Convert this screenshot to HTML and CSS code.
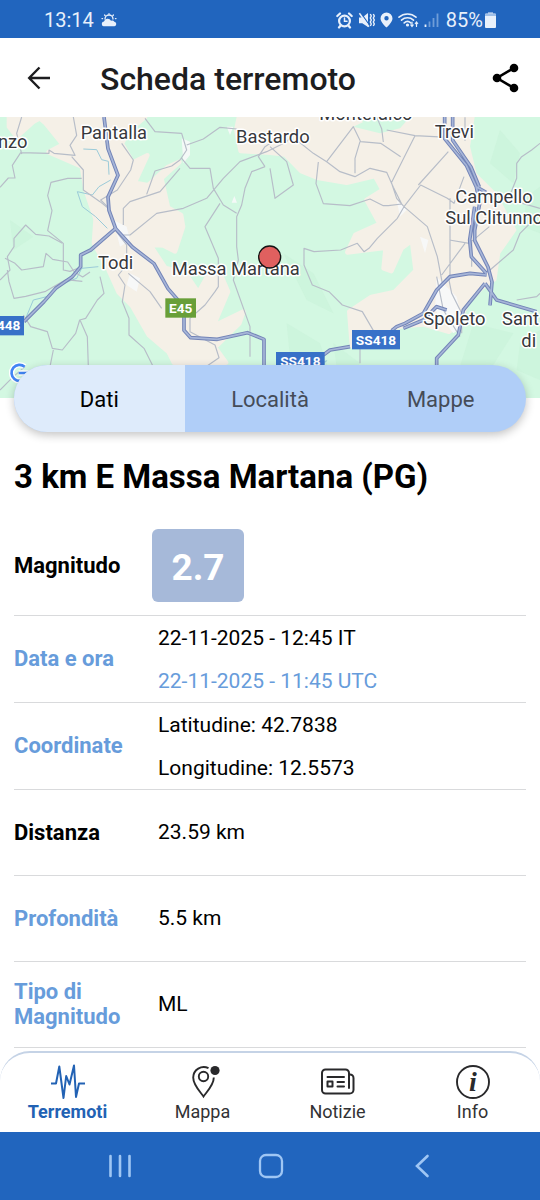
FILE: index.html
```html
<!DOCTYPE html>
<html lang="it">
<head>
<meta charset="utf-8">
<meta name="viewport" content="width=device-width, initial-scale=1">
<title>Scheda terremoto</title>
<link rel="stylesheet" href="styles.css">
</head>
<body>
<div class="status">
  <span class="status-time">13:14</span>
  <svg class="status-weather" width="16" height="14" viewBox="0 0 16 14" fill="none" stroke="#e8f0fb" stroke-width="1.3" stroke-linecap="round"><path d="M4 6a4 4 0 0 1 8 0M8 .7v.5M3.600 2l.5.6M12.400 2l-.5.6M1 5.600h.6M14.400 5.600h.6"/><path d="M2.500 13.300a2.400 2.400 0 0 1 .5-4.700 3.800 3.800 0 0 1 7-.8 2.900 2.900 0 0 1 3.400 1 2.300 2.300 0 0 1 .1 4.500z" fill="#e8f0fb" stroke="none"/></svg>
  <div class="status-icons">
    <svg width="17" height="17" viewBox="0 0 17 17" fill="none" stroke="#e8f0fb" stroke-width="2.200" stroke-linecap="round"><circle cx="8.500" cy="9" r="5.400"/><path d="M1.300 4 4 1.500M15.700 4 13 1.500M4.200 14l-1.200 1.500M12.800 14l1.200 1.500"/><path d="M8.500 6v3.200H11" stroke-width="1.500"/></svg>
    <svg width="17" height="17" viewBox="0 0 17 17" fill="#e8f0fb"><path d="M1 5.500h3.300L10 1v14l-5.700-3.800H1z"/><path d="m2.600.6 9.500 13.600" stroke="#2165be" stroke-width="1.200"/><path d="m1.400 1.200 9.500 13.600" stroke="#e8f0fb" stroke-width="1.500"/><path d="m12.300 2 1 2-1 2 1 2-1 2 1 2-1 2M15.300 2l1 2-1 2 1 2-1 2 1 2-1 2" stroke="#e8f0fb" stroke-width="1.400" fill="none"/></svg>
    <svg width="13" height="16" viewBox="0 0 13 16"><path fill="#e8f0fb" fill-rule="evenodd" d="M6.500.5a6 6 0 0 0-6 6c0 4 6 9 6 9s6-5 6-9a6 6 0 0 0-6-6zm0 3.600a2.200 2.200 0 1 1 0 4.400 2.200 2.200 0 0 1 0-4.400z"/></svg>
    <svg width="21" height="16" viewBox="0 0 21 16" fill="none" stroke="#e8f0fb" stroke-width="1.600" stroke-linecap="round"><path d="M1 5.200a13 13 0 0 1 17 0M3.500 8.100a9 9 0 0 1 12 0M6.200 10.900a5 5 0 0 1 6.600 0"/><circle cx="9.500" cy="13" r=".8" fill="#e8f0fb"/><path d="M14 10v4M12.800 13l1.200 1.500 1.200-1.500M18.500 14.500v-4M17.300 11.500l1.200-1.500 1.200 1.500" stroke-width="1.200"/></svg>
    <svg width="15" height="16" viewBox="0 0 15 16" stroke-width="1.800"><path d="M1.500 15v-2.500" stroke="#e8f0fb"/><path d="M5.500 15V9.500M9.500 15V6M13.500 15V1.500" stroke="#6f9dd8"/></svg>
  </div>
  <span class="status-battery">85%</span>
  <svg width="11" height="16" viewBox="0 0 11 16" fill="#e8f0fb"><path d="M3 0h5v2H3z" opacity=".5"/><rect y="1.500" width="11" height="14.500" rx="1"/><path d="M0 3h11" stroke="#9fbfe8" stroke-width="2"/></svg>
</div>

<header class="appbar">
  <button class="icon-button" aria-label="Indietro"><svg width="24" height="24" viewBox="0 0 24 24" fill="none" stroke="#1d1d1f" stroke-width="2.400"><path d="M24 12H3.500M13.500 1.500 3.200 12l10.300 10.500"/></svg></button>
  <h1 class="appbar-title">Scheda terremoto</h1>
  <button class="icon-button" aria-label="Condividi"><svg width="28" height="30" viewBox="0 0 28 30"><path d="M22 5 5 15l17 10" fill="none" stroke="#000" stroke-width="2.600"/><circle cx="22" cy="5" r="4.300"/><circle cx="5" cy="15" r="4.300"/><circle cx="22" cy="25" r="4.300"/></svg></button>
</header>

<main class="content">
  <svg class="map" viewBox="0 21 1620 843" preserveAspectRatio="xMidYMid slice" role="img" aria-label="Mappa dell'epicentro">
    <rect y="21" width="1620" height="843" fill="#d3f8e2"/>
    <g fill="#c7f1d7">
      <path d="M1500 60l60 70-20 90-70-60zM850 430l90 60 60 120-80-40zM860 640l100 60 30 90-120-50zM1420 640l120 30-70 110-40 60-50-70zM560 580l80 90-60 60zM30 330l70 50-60 40zM1560 700l60-40v150l-70-30zM1000 700l80 60-60 80zM1580 260l40-30v140l-50-20z" opacity=".5"/>
    </g>
    <g fill="#f5f0e7" stroke="#f5f0e7" stroke-width="14" stroke-linejoin="round">
      <path d="M27 21h100l-27 14-50 45-23-30z"/>
      <path d="M115 21H435L392 58 365 100 398 158 442 136 404 218 444 226 502 172 538 156 484 205 504 293 543 315 549 350 525 424 490 406 450 404 496 474 556 490 595 548 630 485 661 492 684 545 640 648 730 605 718 640 645 712 678 758H522L506 726 447 676 396 587 356 547 326 480 282 400 287 327 257 240 246 170 146 126 189 104 137 40z"/>
      <path d="M717 21h700L1403 110 1423 193 1484 254 1542 360 1494 428 1483 507 1444 534 1403 576 1373 644 1347 665 1270 643 1210 648 1140 663 1056 708 1048 605 1114 561 1184 546 1247 482 1236 392 1205 414 1174 483 1151 475 1157 413 1042 427 1066 375 1139 342 1100 270 1148 240 1125 198 1040 218 952 203 904 183 855 133 811 128 722 123 709 60z"/>
    </g>
    <path fill="#d3f8e2" d="M1060 50l80 20 60-15 30-34H1060l30 15z"/>
    <g fill="#f7f8fa" opacity=".9"><path d="M340 330l40 20 10 40-30 20zM545 85l25 10v40l-20 25zM680 50h20l-10 25zM1190 270l30 30-20 20zM1260 380l25 10-10 40zM1310 500l60 60 20 90-30 20-55-70zM390 490l30 15-10 40-30-20zM695 278l8-20 8 20z"/></g>
    <g fill="none" stroke="#9bcbd9" stroke-width="3">
      <path d="M250 117l40 2 15 30 20 5 2 40M332 210l-35 20-20 25-45-10 15 45 40 30 35 35M75 630l25-60 40-10 50-40 40-15 15-30 50-5M940 750l20 12 20-10-20 20"/>
    </g>
    <g fill="none" stroke="#b7bdc8" stroke-width="3.500" stroke-linejoin="round">
      <path d="M0 232l25-28h20l-8-38 25-38 85 2v-10l15 10 63 6-15-30 20-30-10-55M65 21L50 70l15 62"/>
      <path d="M215 140l35 40v60l50 35 25 20M245 205h-42l-50 12-10 40 13 45-13 60 47 38v80l20 4 26-10"/>
      <path d="M0 510l30-30-8-40 20-30v-25l35-40 30 28 40 5 40 22"/>
      <path d="M22 480l5 35 15 50 35-6 60-15 60-35 50 5M15 445l30 15 20 20 65-10 8-40 20 18 45 8 20 30 25 15 22-15"/>
      <path d="M300 500l12 50-20 20-35 55-18 5-12 40-40 50-30-5-15-50-50-15-22-35M240 630l22 50 3 90M160 720l-10 50M0 840l40-40 35-30"/>
      <path d="M365 100l35 50-8 30-40 60-50 30 20 20M435 25l30 40 80 5 15 50-20 30-25 18-50 15-25 70M560 105l50-18 50-35 50 5M545 145l25 30h60l10 60 30 50 40 25M370 345v-50l20-20 90-30 60-70M370 375h20l80-65 80-15 70-30 50-60 50-50 80-30 60-30 30-35"/>
      <path d="M795 170l-20-30 20-30 30-20M795 170l-40 15-20 50-10 50-15 35v90l5 40-15 60 50 140v90"/>
      <path d="M660 280l-45 70 40 95v85l-10 15-30 40-45 40v40l75 40 12 38-50 35M345 360l35 45v60l-25 30 20 30-8 50 20 50v50l45 40 30 60M385 490l65 55 35 50"/>
      <path d="M810 110l50 45 20 70-55 40-15-90M890 90l50 40 40 25M980 155l80-105 22 45 60 5 60 40M1080 95l-15 50v45M980 155l40 30 45 15 45-25 50 12 20 45 25 50-40 5h-15l-40-20-60 20-80-6-22-60 7-65M1130 21l15 35 5 40M1160 60l85 17 100 5M1245 77l-40 80-30 60M1175 220l15 45 22 25 70 60 30 90 15 80M1212 290l50-65 80 40 20 15 30-80M1255 225l90-100M1212 290l-20 35-60 60-25 30-15 10-20-25-50 20-80 5-30-10v50l25 60 50 20 40 40 60 20 35 60M1350 265v240M1348 390l60 10 60-50M1395 400l-70 95M1415 390v80M1395 22v70M1620 310l-60 60-20 50-70 60"/>
      <path d="M1620 100l-25 20-30 20-15 20v45l-20 50 20 20 70 20M1310 500l20 100 50 80M1345 500l10 50 30 60v60M1620 550l-10 10-60 10M1080 700v60"/>
    </g>
    <g fill="none" stroke-linejoin="round">
      <g stroke="#7384b7" stroke-width="11">
        <path d="M312 21l12 95 30 80-30 65 3 40 20 55 50 55 65 50 42 75 48 55v70l20 22 80 5 90-20 50 20v90"/>
        <path d="M347 355l-75 65-30 15v35l-25 30-50 35-35 40-60 60"/>
        <path d="M1334 21v65l65 80 30 65 10 50-15 80v30l40 80 12 45-6 70M1358 21v70l55 80 25 60M1424 290l-15 100 5 50 45 50M1430 231l28 16M1460 495l-50-5-60 10-40 40-40 70-55 30-25 10-15 12M1455 520l35 50 120 35M1455 520l-65 80-15 75-65 70v50M1210 655l60-25 40-40 30 10M970 735l20-15 60-10"/>
      </g>
      <g stroke="#a6b5d8" stroke-width="5">
        <path d="M312 21l12 95 30 80-30 65 3 40 20 55 50 55 65 50 42 75 48 55v70l20 22 80 5 90-20 50 20v90"/>
        <path d="M347 355l-75 65-30 15v35l-25 30-50 35-35 40-60 60"/>
        <path d="M1334 21v65l65 80 30 65 10 50-15 80v30l40 80 12 45-6 70M1358 21v70l55 80 25 60M1424 290l-15 100 5 50 45 50M1430 231l28 16M1460 495l-50-5-60 10-40 40-40 70-55 30-25 10-15 12M1455 520l35 50 120 35M1455 520l-65 80-15 75-65 70v50M1210 655l60-25 40-40 30 10M970 735l20-15 60-10"/>
      </g>
    </g>
    <g class="map-labels">
      <text x="-6" y="113">nzo</text>
      <text x="242" y="87">Pantalla</text>
      <text x="708" y="99">Bastardo</text>
      <text x="958" y="29">Montefalco</text>
      <text x="1304" y="85">Trevi</text>
      <text x="1366" y="279">Campello</text>
      <text x="1336" y="343">Sul Clitunno</text>
      <text x="294" y="477">Todi</text>
      <text x="515" y="496">Massa Martana</text>
      <text x="1270" y="646">Spoleto</text>
      <text x="1506" y="646">Sant</text>
      <text x="1564" y="712">di</text>
    </g>
    <g fill="#3871c8">
      <rect x="496" y="565" width="92" height="58" fill="#689f38"/>
      <rect x="-40" y="618" width="112" height="58"/>
      <rect x="1056" y="660" width="144" height="58"/>
      <rect x="828" y="726" width="146" height="58"/>
    </g>
    <g class="map-shields">
      <text x="542" y="608">E45</text>
      <text x="26" y="661">448</text>
      <text x="1128" y="704">SS418</text>
      <text x="901" y="768">SS418</text>
    </g>
    <circle cx="809" cy="441" r="33" fill="#e0605f" stroke="#141414" stroke-width="4"/>
    <path d="M74 770a24 24 0 1 0 3 34M56 789h30" fill="none" stroke="#fff" stroke-width="16"/>
    <path d="M74 770a24 24 0 1 0 3 34M56 789h30" fill="none" stroke="#4285f4" stroke-width="8"/>
  </svg>

  <div class="tabs" role="tablist">
    <button class="tab tab-active" role="tab" aria-selected="true">Dati</button>
    <button class="tab" role="tab" aria-selected="false">Località</button>
    <button class="tab" role="tab" aria-selected="false">Mappe</button>
  </div>

  <section class="details">
    <h2 class="place">3 km E Massa Martana (PG)</h2>
    <table class="facts">
      <tr class="row-magnitude"><th scope="row">Magnitudo</th><td class="magnitude-cell"><span class="magnitude">2.7</span></td></tr>
      <tr><th scope="row" class="link">Data e ora</th><td><p>22-11-2025 - 12:45 IT</p><p class="link">22-11-2025 - 11:45 UTC</p></td></tr>
      <tr><th scope="row" class="link">Coordinate</th><td><p>Latitudine: 42.7838</p><p>Longitudine: 12.5573</p></td></tr>
      <tr><th scope="row">Distanza</th><td>23.59 km</td></tr>
      <tr><th scope="row" class="link">Profondità</th><td>5.5 km</td></tr>
      <tr><th scope="row" class="link">Tipo di Magnitudo</th><td>ML</td></tr>
    </table>
  </section>
</main>

<nav class="nav">
  <a class="nav-item nav-active" href="#terremoti"><svg width="36" height="36" viewBox="0 0 36 36" fill="none" stroke="#2262b4" stroke-width="2" stroke-linejoin="round"><path d="M1 19.500h5l3.300-17 4.200 31.500 2.700-22 3.300 8.500L24 1.500l2 31.500 3-13.500h6"/></svg>Terremoti</a>
  <a class="nav-item" href="#mappa"><svg width="36" height="36" viewBox="0 0 36 36" fill="none" stroke="#29292b" stroke-width="1.900"><path d="M23.500 4.200A10.500 10.500 0 0 0 8.200 13.500C8.200 21 15 27.500 18.500 32.500c3.500-5 10.300-11.500 10.300-19"/><circle cx="18.500" cy="12.500" r="4.700"/><circle cx="30" cy="6.500" r="4.600" fill="#29292b" stroke="none"/></svg>Mappa</a>
  <a class="nav-item" href="#notizie"><svg width="36" height="36" viewBox="0 0 36 36" fill="none" stroke="#29292b" stroke-width="2" stroke-linecap="round" stroke-linejoin="round"><path d="M29 24V9a3.500 3.500 0 0 0-3.500-3.500h-20A3.500 3.500 0 0 0 2 9v17a3.500 3.500 0 0 0 3.500 3.500h24A4 4 0 0 0 33.500 26V14a3.500 3.500 0 0 0-4-3.500M7.500 13h16.500M17.500 18H24M17.500 22.500H24M7.500 17.500h5v5h-5z"/></svg>Notizie</a>
  <a class="nav-item" href="#info"><svg width="36" height="36" viewBox="0 0 36 36"><circle cx="18" cy="18" r="16" fill="none" stroke="#29292b" stroke-width="1.900"/><text class="info-letter" x="18" y="27">i</text></svg>Info</a>
</nav>
<div class="system">
  <button class="system-button" aria-label="App recenti"><svg width="24" height="26" viewBox="0 0 24 26" stroke="#9fc6f4" stroke-width="2.600" stroke-linecap="round"><path d="M2.500 3v20M12 3v20M21.500 3v20"/></svg></button>
  <button class="system-button" aria-label="Home"><svg width="26" height="26" viewBox="0 0 26 26" fill="none" stroke="#9fc6f4" stroke-width="2.300"><rect x="2" y="2" width="22" height="22" rx="6"/></svg></button>
  <button class="system-button" aria-label="Indietro"><svg width="26" height="26" viewBox="0 0 26 26" fill="none" stroke="#9fc6f4" stroke-width="2.600" stroke-linecap="round"><path d="M18.500 3 8 13l10.500 10"/></svg></button>
</div>
</body>
</html>
```
FILE: styles.css
```css
* { box-sizing: border-box; }
body {
  margin: 0;
  min-height: 100vh;
  display: flex;
  flex-direction: column;
  background: #fff;
  color: #000;
  font-family: Roboto, "Liberation Sans", sans-serif;
  font-size: 22px;
}
button { border: 0; padding: 0; background: none; font: inherit; color: inherit; }
svg { display: block; flex: none; }

.status {
  display: flex;
  align-items: center;
  height: 38px;
  padding: 2px 44px 0;
  background: #2165be;
  color: #e8f0fb;
  font-size: 20px;
}
.status-weather { margin-left: 7px; }
.status-icons { display: flex; align-items: center; gap: 5px; margin-left: auto; }
.status-battery { margin: 0 2px 0 7px; }

.appbar {
  display: flex;
  align-items: center;
  height: 79px;
  padding: 0 20px 0 26px;
}
.icon-button { display: flex; }
.appbar-title {
  flex: 1;
  margin: 0 0 0 50px;
  padding-top: 2px;
  color: #1d1d1f;
  font-size: 32px;
  font-weight: 500;
  line-height: 40px;
}

.content { flex: 1; }
.map { width: 100%; height: 281px; }
.map-labels {
  fill: #37383c;
  font-size: 55px;
  stroke: #fff;
  stroke-width: 9px;
  stroke-linejoin: round;
  paint-order: stroke;
}
.map-shields {
  fill: #fff;
  font-size: 41px;
  font-weight: 700;
  text-anchor: middle;
}

.tabs {
  position: relative;
  display: flex;
  margin: -33px 14px 0;
  height: 67px;
  border-radius: 34px;
  overflow: hidden;
  background: #b0cef8;
  box-shadow: 0 3px 10px rgba(0, 0, 0, 0.24);
}
.tab { flex: 1; padding-top: 2px; color: #454c58; }
.tab-active { background: #deebfb; color: #000; }

.details { padding: 25px 14px 0; }
.place {
  margin: 0;
  font-size: 33px;
  font-weight: 700;
  line-height: 40px;
}
.facts { width: 100%; margin-top: 20px; border-collapse: collapse; }
.facts tr { height: 86px; border-bottom: 1px solid #d9dadc; }
.facts .row-magnitude { height: 98px; }
.facts th {
  width: 138px;
  padding: 0;
  text-align: left;
  font-weight: 700;
  line-height: 25px;
}
.facts td { padding: 0 0 0 6px; font-size: 21px; line-height: 26px; }
.facts .magnitude-cell { padding: 0; }
.facts p { margin: 0; padding: 9px 0 8px; }
.facts .link { color: #679cdb; }
.magnitude {
  display: flex;
  align-items: center;
  justify-content: center;
  width: 92px;
  height: 73px;
  padding-top: 4px;
  border-radius: 6px;
  background: #a6b9d9;
  color: #fff;
  font-size: 37px;
  font-weight: 700;
}

.nav {
  display: flex;
  height: 81px;
  margin-top: auto;
  border-top: 2px solid #c5d3e6;
  border-radius: 30px 30px 0 0;
}
.nav-item {
  flex: 1;
  display: flex;
  flex-direction: column;
  align-items: center;
  gap: 2px;
  padding-top: 11px;
  color: #323234;
  font-size: 18px;
  line-height: 20px;
  text-decoration: none;
}
.nav-active { color: #2262b4; font-weight: 700; }
.info-letter {
  fill: #29292b;
  font-family: "Liberation Serif", serif;
  font-size: 28px;
  font-style: italic;
  font-weight: 700;
  text-anchor: middle;
}

.system {
  display: flex;
  align-items: center;
  justify-content: space-between;
  height: 68px;
  padding: 0 105px 0 108px;
  background: #2165be;
}
.system-button { display: flex; }
```
